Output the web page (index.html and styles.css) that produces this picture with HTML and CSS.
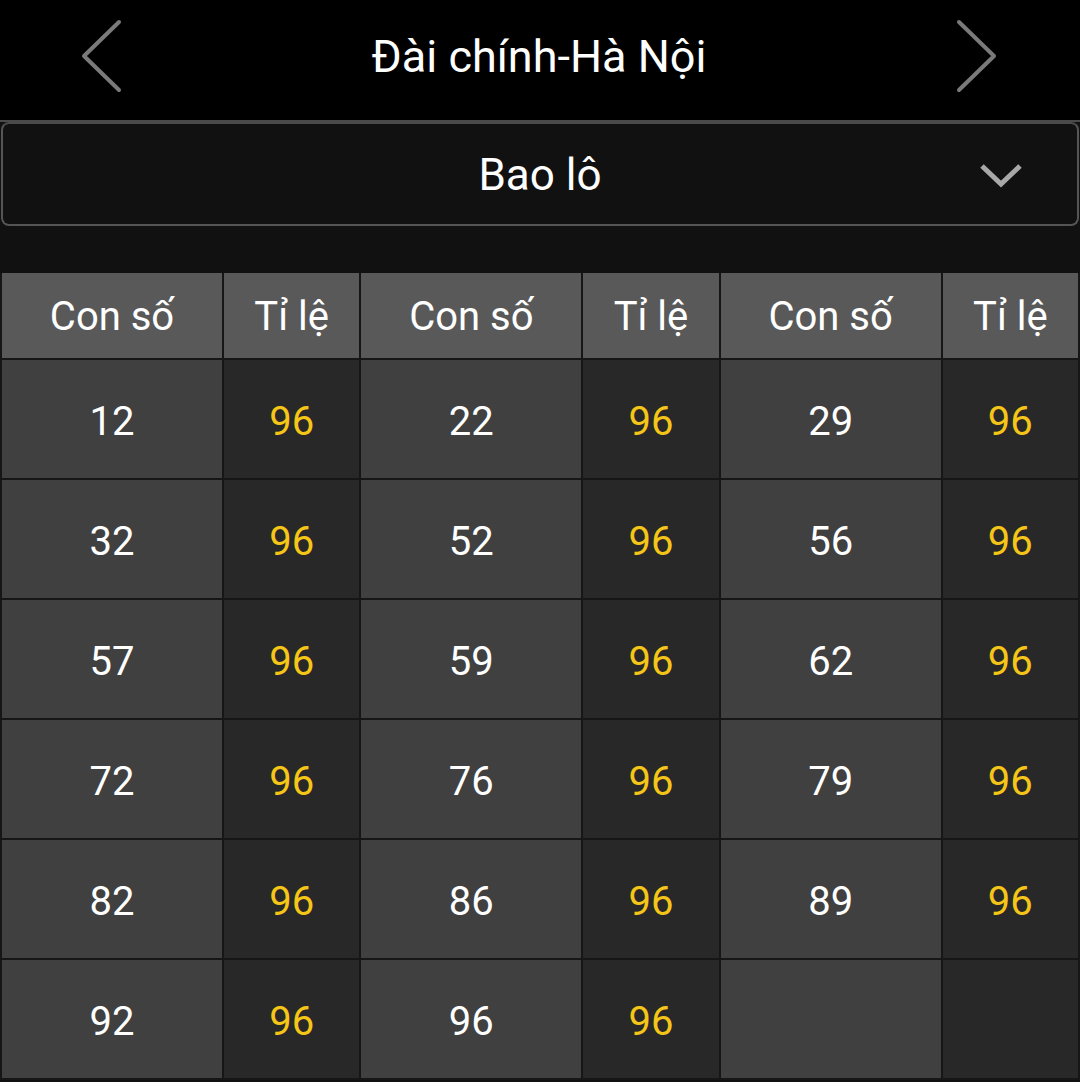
FILE: index.html
```html
<!DOCTYPE html>
<html lang="vi">
<head>
<meta charset="utf-8">
<link rel="stylesheet" href="styles.css">
</head>
<body>
<div class="app">
  <header class="topbar">
    <svg class="nav nav-left" width="48" height="80" viewBox="0 0 48 80"><path d="M39 3 L4 37 L39 71" fill="none" stroke="#7a7a7a" stroke-width="4" stroke-linecap="round" stroke-linejoin="round"/></svg>
    <h1 class="title">Đài chính-Hà Nội</h1>
    <svg class="nav nav-right" width="48" height="80" viewBox="0 0 48 80"><path d="M9 3 L44 37 L9 71" fill="none" stroke="#7a7a7a" stroke-width="4" stroke-linecap="round" stroke-linejoin="round"/></svg>
  </header>
  <div class="divider"></div>
  <div class="select">
    <span class="select-label">Bao lô</span>
    <svg class="select-arrow" width="44" height="28" viewBox="0 0 44 28"><path d="M3 4 L22 22 L41 4" fill="none" stroke="#a8a8a8" stroke-width="5"/></svg>
  </div>
  <div class="spacer"></div>
  <div class="grid">
    <div class="cell head">Con số</div><div class="cell head">Tỉ lệ</div>
    <div class="cell head">Con số</div><div class="cell head">Tỉ lệ</div>
    <div class="cell head">Con số</div><div class="cell head">Tỉ lệ</div>

    <div class="cell num">12</div><div class="cell rate">96</div>
    <div class="cell num">22</div><div class="cell rate">96</div>
    <div class="cell num">29</div><div class="cell rate">96</div>

    <div class="cell num">32</div><div class="cell rate">96</div>
    <div class="cell num">52</div><div class="cell rate">96</div>
    <div class="cell num">56</div><div class="cell rate">96</div>

    <div class="cell num">57</div><div class="cell rate">96</div>
    <div class="cell num">59</div><div class="cell rate">96</div>
    <div class="cell num">62</div><div class="cell rate">96</div>

    <div class="cell num">72</div><div class="cell rate">96</div>
    <div class="cell num">76</div><div class="cell rate">96</div>
    <div class="cell num">79</div><div class="cell rate">96</div>

    <div class="cell num">82</div><div class="cell rate">96</div>
    <div class="cell num">86</div><div class="cell rate">96</div>
    <div class="cell num">89</div><div class="cell rate">96</div>

    <div class="cell num">92</div><div class="cell rate">96</div>
    <div class="cell num">96</div><div class="cell rate">96</div>
    <div class="cell num"></div><div class="cell rate"></div>
  </div>
</div>
</body>
</html>
```

FILE: styles.css
```css
* { box-sizing: border-box; }
html, body {
  margin: 0;
  padding: 0;
  background: #111111;
}
body {
  font-family: Roboto, "Noto Sans", "Liberation Sans", sans-serif;
  color: #ffffff;
  width: 1080px;
  height: 1082px;
  overflow: hidden;
}
.app {
  display: flex;
  flex-direction: column;
}
.topbar {
  height: 120px;
  background: #000000;
  display: flex;
  align-items: center;
  justify-content: space-between;
  padding: 0 82px 0 80px;
}
.nav { display: block; margin-top: -2px; }
.title {
  margin: 0;
  font-weight: 400;
  font-size: 45px;
  line-height: 1;
  margin-top: -8px;
}
.divider {
  height: 2px;
  background: #4a4a4a;
}
.select {
  height: 104px;
  margin: 0 1px;
  border: 2px solid #555555;
  border-top-color: #4a4a4a;
  border-radius: 8px;
  background: #111111;
  display: flex;
  align-items: center;
  justify-content: center;
  position: relative;
}
.select-label {
  font-size: 44px;
  line-height: 1;
  margin-top: 2px;
}
.select-arrow {
  position: absolute;
  right: 54px;
  top: 38px;
}
.spacer { height: 47px; }
.grid {
  display: grid;
  grid-template-columns: 220fr 135.3fr 220fr 135.3fr 220fr 135.3fr;
  grid-template-rows: 85px repeat(6, 118px);
  gap: 2px;
  padding: 0 2px 2px;
  background: #161616;
}
.cell {
  display: flex;
  align-items: center;
  justify-content: center;
  font-size: 40px;
  line-height: 1;
  padding-top: 2px;
}
.head {
  background: #595959;
  color: #ffffff;
}
.num {
  background: #404040;
  color: #ffffff;
  padding-top: 5px;
}
.rate {
  background: #282828;
  color: #f5c518;
  padding-top: 5px;
}
```
